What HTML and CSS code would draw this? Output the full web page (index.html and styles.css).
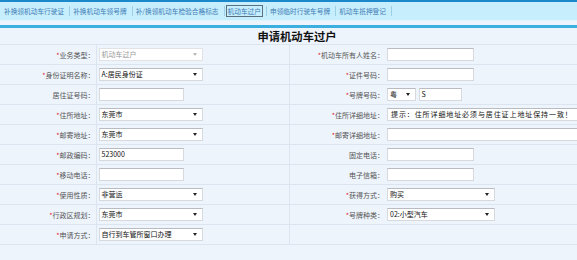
FILE: index.html
```html
<!DOCTYPE html>
<html lang="zh-CN">
<head>
  <meta charset="UTF-8" />
  <title>申请机动车过户</title>
  <link rel="stylesheet" href="styles.css">
</head>
<body>
  <div class="tabs">
    <a class="tab">补换领机动车行驶证</a>
    <a class="tab">补换机动车领号牌</a>
    <a class="tab">补/换领机动车检验合格标志</a>
    <a class="tab active">机动车过户</a>
    <a class="tab">申领临时行驶车号牌</a>
    <a class="tab">机动车抵押登记</a>
  </div>

  <div class="panel">
    <table class="form">
      <colgroup>
        <col class="c-label">
        <col class="c-field">
        <col class="c-label">
        <col>
      </colgroup>
      <tr class="title-row">
        <td colspan="4">申请机动车过户</td>
      </tr>
      <tr>
        <th><em>*</em>业务类型：</th>
        <td><span class="sel disabled w104">机动车过户</span></td>
        <th><em>*</em>机动车所有人姓名：</th>
        <td><span class="txt w87"></span></td>
      </tr>
      <tr>
        <th><em>*</em>身份证明名称：</th>
        <td><span class="sel w104">A:居民身份证</span></td>
        <th><em>*</em>证件号码：</th>
        <td><span class="txt w87"></span></td>
      </tr>
      <tr>
        <th>居住证号码：</th>
        <td><span class="txt w85"></span></td>
        <th><em>*</em>号牌号码：</th>
        <td class="plate">
          <span class="sel w28">粤</span>
          <span class="txt w43">S</span>
        </td>
      </tr>
      <tr>
        <th><em>*</em>住所地址：</th>
        <td><span class="sel w104">东莞市</span></td>
        <th><em>*</em>住所详细地址：</th>
        <td><span class="txt wide">提示：住所详细地址必须与居住证上地址保持一致！</span></td>
      </tr>
      <tr>
        <th><em>*</em>邮寄地址：</th>
        <td><span class="sel w104">东莞市</span></td>
        <th><em>*</em>邮寄详细地址：</th>
        <td><span class="txt wide"></span></td>
      </tr>
      <tr>
        <th><em>*</em>邮政编码：</th>
        <td><span class="txt w85">523000</span></td>
        <th>固定电话：</th>
        <td><span class="txt w87"></span></td>
      </tr>
      <tr>
        <th><em>*</em>移动电话：</th>
        <td><span class="txt w85"></span></td>
        <th>电子信箱：</th>
        <td><span class="txt w87"></span></td>
      </tr>
      <tr>
        <th><em>*</em>使用性质：</th>
        <td><span class="sel w104">非营运</span></td>
        <th><em>*</em>获得方式：</th>
        <td><span class="sel w108">购买</span></td>
      </tr>
      <tr>
        <th><em>*</em>行政区规划：</th>
        <td><span class="sel w104">东莞市</span></td>
        <th><em>*</em>号牌种类：</th>
        <td><span class="sel w108">02:小型汽车</span></td>
      </tr>
      <tr>
        <th><em>*</em>申请方式：</th>
        <td><span class="sel w104">自行到车管所窗口办理</span></td>
        <th></th>
        <td></td>
      </tr>
    </table>
  </div>
</body>
</html>
```

FILE: styles.css
```css
body {
  margin: 0;
  width: 577px;
  height: 260px;
  overflow: hidden;
  background: #eef4fc;
  font-family: "Noto Sans CJK SC", "Noto Sans", sans-serif;
  font-size: 7px;
  color: #333;
}

.tabs {
  display: flex;
  align-items: center;
  height: 18px;
  padding-left: 3px;
  background: #c7eefc;
  border-top: 2px solid #1a88c9;
  border-bottom: 1px solid #e2f6fd;
}

.tab {
  font-size: 6.7px;
  line-height: 10px;
  color: #3d7bb5;
  padding: 0 1px;
  margin-right: 7px;
  position: relative;
  white-space: nowrap;
}

.tab::after {
  content: "";
  position: absolute;
  right: -5px;
  top: 0;
  height: 10px;
  border-right: 1px solid #9fcfe4;
}

.tab.active {
  outline: 1px solid #5a6f80;
}

.panel {
  margin-top: 4px;
  border-top: 3px solid #3aafe0;
  width: 577px;
  overflow: hidden;
}

.form {
  width: 594px;
  border-collapse: collapse;
  table-layout: fixed;
}

.c-label { width: 96px; }
.c-field { width: 193px; }

.form th,
.form td {
  height: 19px;
  padding: 0;
  border-bottom: 1px solid #dbe4ef;
  white-space: nowrap;
  overflow: hidden;
}

.form th {
  font-weight: normal;
  text-align: right;
  color: #555;
  padding-right: 1px;
}

.form td:nth-child(2) { border-left: 1px solid #dbe4ef; padding-left: 2px; }
.form th:nth-child(3) { border-left: 1px solid #dbe4ef; }
.form td:nth-child(4) { padding-left: 2px; }

.form em {
  font-style: normal;
  color: #d23;
}

.title-row td {
  height: 14px;
  text-align: center;
  font-size: 11.3px;
  font-weight: bold;
  color: #111;
}

.txt,
.sel {
  display: inline-block;
  vertical-align: middle;
  box-sizing: border-box;
  height: 13px;
  line-height: 11px;
  padding-left: 2px;
  background: #fff;
  border: 1px solid #d6d9de;
  border-top-color: #b8bcc2;
  color: #111;
  overflow: hidden;
}

.sel {
  position: relative;
  padding-right: 10px;
}

.sel::after {
  content: "";
  position: absolute;
  right: 5px;
  top: 4px;
  border-left: 2px solid transparent;
  border-right: 2px solid transparent;
  border-top: 3px solid #222;
}

.sel.disabled {
  color: #999;
  border-color: #e0e2e5;
}

.sel.disabled::after {
  border-top-color: #bbb;
}

.plate .txt {
  margin-left: 1px;
}

.txt.wide {
  letter-spacing: 0.9px;
  padding-left: 3px;
}

.w28 { width: 29px; }
.w43 { width: 43px; }
.w85 { width: 85px; }
.w87 { width: 87px; }
.w104 { width: 104px; }
.w108 { width: 108px; }
.wide { width: 205px; }
```
